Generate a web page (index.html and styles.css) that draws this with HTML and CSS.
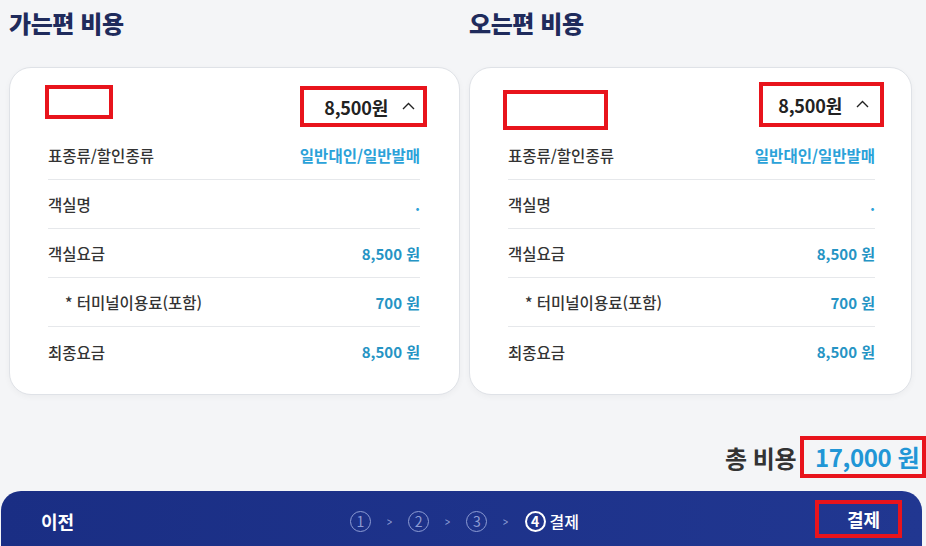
FILE: index.html
```html
<!DOCTYPE html>
<html lang="ko">
<head>
    <meta charset="UTF-8">
    <meta name="viewport" content="width=device-width, initial-scale=1.0">
    <title>결제 - 비용 확인</title>
    <link rel="stylesheet" href="styles.css">
</head>
<body>
    <div class="trips">
        <section class="trip trip-go">
            <h2>가는편 비용</h2>
            <div class="card">
                <div class="card-head">
                    <div class="mark-box name-box"></div>
                    <div class="mark-box price-box">
                        <span class="price">8,500원</span>
                        <svg class="chevron" width="13" height="8" viewBox="0 0 13 8"><path d="M1 7 L6.5 1.5 L12 7" fill="none" stroke="#222" stroke-width="1.4"/></svg>
                    </div>
                </div>
                <ul class="rows">
                    <li><span>표종류/할인종류</span><strong>일반대인/일반발매</strong></li>
                    <li><span>객실명</span><strong>.</strong></li>
                    <li><span>객실요금</span><strong class="money">8,500 원</strong></li>
                    <li class="sub"><span>* 터미널이용료(포함)</span><strong class="money">700 원</strong></li>
                    <li><span>최종요금</span><strong class="money">8,500 원</strong></li>
                </ul>
            </div>
        </section>

        <section class="trip trip-back">
            <h2>오는편 비용</h2>
            <div class="card">
                <div class="card-head">
                    <div class="mark-box name-box"></div>
                    <div class="mark-box price-box">
                        <span class="price">8,500원</span>
                        <svg class="chevron" width="13" height="8" viewBox="0 0 13 8"><path d="M1 7 L6.5 1.5 L12 7" fill="none" stroke="#222" stroke-width="1.4"/></svg>
                    </div>
                </div>
                <ul class="rows">
                    <li><span>표종류/할인종류</span><strong>일반대인/일반발매</strong></li>
                    <li><span>객실명</span><strong>.</strong></li>
                    <li><span>객실요금</span><strong class="money">8,500 원</strong></li>
                    <li class="sub"><span>* 터미널이용료(포함)</span><strong class="money">700 원</strong></li>
                    <li><span>최종요금</span><strong class="money">8,500 원</strong></li>
                </ul>
            </div>
        </section>
    </div>

    <div class="total">
        <span class="total-label">총 비용</span>
        <span class="mark-box total-box">17,000 원</span>
    </div>

    <nav class="bottom-bar">
        <a class="prev">이전</a>
        <ol class="steps">
            <li class="step">1</li>
            <li class="arrow">&gt;</li>
            <li class="step">2</li>
            <li class="arrow">&gt;</li>
            <li class="step">3</li>
            <li class="arrow">&gt;</li>
            <li class="current"><span class="step">4</span>결제</li>
        </ol>
        <a class="mark-box pay">결제</a>
    </nav>
</body>
</html>
```

FILE: styles.css
```css
* {
    box-sizing: border-box;
}

body {
    margin: 0;
    width: 926px;
    height: 546px;
    overflow: hidden;
    background: #f4f5f7;
    font-family: "Noto Sans CJK KR", "Noto Sans", sans-serif;
    color: #333;
}

.trips {
    display: grid;
    grid-template-columns: 451px 443px;
    column-gap: 9px;
    padding-left: 9px;
}

.trip h2 {
    margin: 0;
    padding-top: 6px;
    height: 67px;
    font-size: 24px;
    line-height: 34px;
    font-weight: 800;
    letter-spacing: -0.4px;
    color: #1f2b5c;
}

.card {
    height: 328px;
    background: #fff;
    border: 1px solid #dfe2e7;
    border-radius: 22px;
    box-shadow: 0 2px 6px rgba(0, 0, 0, 0.04);
    padding: 0 39px 0 38px;
}

.trip-back .card {
    padding-right: 36px;
}

.mark-box {
    border: 4px solid #e8141c;
}

.card-head {
    height: 63px;
    display: flex;
    justify-content: space-between;
    align-items: flex-start;
}

.name-box {
    width: 68px;
    height: 34px;
    margin: 17px 0 0 -3px;
}

.price-box {
    width: 127px;
    height: 41px;
    margin: 18px -7px 0 0;
    display: flex;
    align-items: center;
    justify-content: flex-end;
    gap: 14px;
    padding-right: 8px;
}

.trip-back .name-box {
    width: 105px;
    height: 40px;
    margin: 22px 0 0 -5px;
}

.trip-back .price-box {
    width: 125px;
    height: 45px;
    margin: 14px -9px 0 0;
    padding-right: 11px;
}

.price {
    font-size: 18px;
    font-weight: 700;
    color: #222;
    letter-spacing: -0.2px;
}

.chevron {
    margin-top: -2px;
}

.rows {
    list-style: none;
    margin: 0;
    padding: 0;
}

.rows li {
    display: flex;
    justify-content: space-between;
    align-items: center;
    height: 49px;
    border-bottom: 1px solid #e6e8eb;
    font-size: 15.5px;
}

.rows li:last-child {
    border-bottom: none;
}

.rows li span {
    font-weight: 500;
    color: #333;
}

.rows li.sub span {
    padding-left: 17px;
}

.rows strong {
    font-weight: 700;
    color: #2ba2d9;
}

.rows strong.money {
    font-size: 15px;
    color: #2594c4;
}

.total {
    display: flex;
    justify-content: flex-end;
    align-items: center;
    gap: 4px;
    margin-top: 41px;
    height: 42px;
}

.total-label {
    font-size: 24px;
    font-weight: 700;
    color: #333;
    letter-spacing: -0.5px;
}

.total-box {
    width: 126px;
    height: 42px;
    padding-left: 11px;
    font-size: 24px;
    line-height: 34px;
    font-weight: 700;
    color: #2196d6;
    letter-spacing: -0.4px;
    white-space: nowrap;
}

.bottom-bar {
    margin: 13px 0 0 1px;
    width: 921px;
    height: 60px;
    border-radius: 20px 20px 0 0;
    background: linear-gradient(90deg, #1a2e84, #213791);
    display: grid;
    grid-template-columns: 1fr auto 1fr;
    align-items: center;
    padding: 0 20px 0 40px;
    color: #fff;
}

.prev {
    font-size: 18px;
    font-weight: 700;
}

.steps {
    list-style: none;
    margin: 0 14px 0 0;
    padding: 0;
    display: flex;
    align-items: center;
    gap: 15px;
    color: #8d9cd4;
}

.step {
    width: 21px;
    height: 21px;
    border: 1.5px solid #8d9cd4;
    border-radius: 50%;
    display: flex;
    align-items: center;
    justify-content: center;
    font-size: 14px;
    line-height: 1;
}

.arrow {
    font-size: 13px;
    transform: scaleX(0.7);
}

.current {
    display: flex;
    align-items: center;
    gap: 4px;
    color: #fff;
    font-size: 16px;
    font-weight: 500;
}

.current .step {
    border: 2px solid #fff;
    font-weight: 700;
    color: #fff;
}

.pay {
    justify-self: end;
    align-self: start;
    width: 87px;
    height: 38px;
    margin-top: 9px;
    display: flex;
    align-items: center;
    justify-content: flex-end;
    padding-right: 18px;
    font-size: 18px;
    font-weight: 700;
}
```
